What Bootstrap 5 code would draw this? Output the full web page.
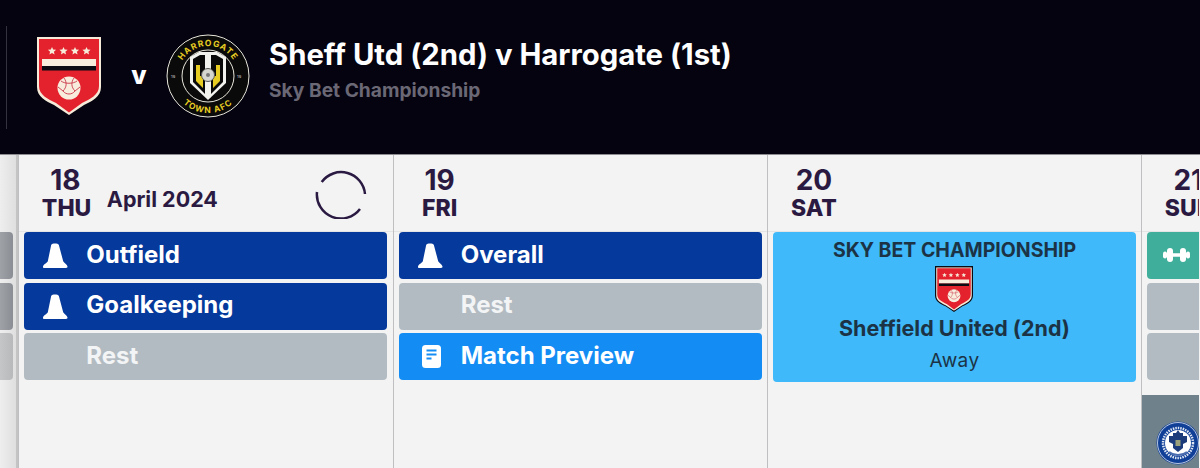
<!DOCTYPE html>
<html lang="en"><head><meta charset="utf-8"><title>Schedule</title>
<link href="https://cdn.jsdelivr.net/npm/bootstrap@5.3.0/dist/css/bootstrap.min.css" rel="stylesheet">
<style>
html,body{width:1200px;height:468px;overflow:hidden;background:#f3f3f4;}
body{font-family:Inter,"Liberation Sans",sans-serif;color:#2a1a42;}
.topbar{height:155px;background:#05030f;border-bottom:1px solid #8d8c91;padding-left:6px;}
.topdiv{width:1px;height:103px;background:#34323e;}
.crest-a{margin-left:30px;margin-top:-3px;}
.vs{width:65px;padding-left:11px;text-align:center;color:#fff;font-size:25px;font-weight:800;line-height:1;margin-top:-3px;}
.crest-b{margin-right:19px;margin-top:-3px;}
.ttlwrap{margin-top:-16px;}
.ttl{font-size:29.300px;font-weight:700;color:#fff;line-height:34px;}
.subttl{font-size:19.200px;font-weight:700;color:#6b6876;line-height:22px;margin-top:7px;}
.daysrow{height:313px;}
.sliver{flex:0 0 18.33px;background:linear-gradient(90deg,#eeeeef,#dfdfe0);border-right:2px solid #c4c4c5;}
.sliver .evt{width:13px;border-radius:0 4px 4px 0;}
.daycol{flex:0 0 374.33px;border-left:1px solid #bfbfc1;}
.daylast{flex:0 0 58px;overflow:hidden;}
.dayhead{height:77px;border-bottom:1px solid #e4e4e5;padding:11px 0 0 22.5px;}
.datebox{width:47px;text-align:center;}
.datenum{font-size:28px;font-weight:700;line-height:29px;}
.datewk{font-size:23px;font-weight:800;line-height:27px;}
.monthname{font-size:21.500px;font-weight:700;margin:20px 0 0 18px;line-height:26px;}
.spinner-ring{margin:1px 26px 0 auto;}
.evts{padding:0 5.33px 0 5px;}
.evt{height:47px;border-radius:4px;color:#fff;font-size:24px;font-weight:700;margin-bottom:3.5px;padding-bottom:2px;}
.evt-ic{width:62px;flex:0 0 62px;padding-left:19px;padding-top:2px;}
.bg-train{background:#05399b;}
.bg-rest{background:#b2bbc1;color:#f3f4f5;}
.bg-preview{background:#138df4;}
.bg-gym{background:#3fae9a;}
.bg-match{background:#3fb9f9;color:#1c3346;height:150px;border-radius:4px;}
.m-comp{font-size:19.500px;font-weight:700;line-height:24px;padding-top:6px;}
.m-team{font-size:21.500px;font-weight:700;line-height:26px;margin-top:3px;}
.m-away{font-size:19px;font-weight:400;line-height:24px;margin-top:8px;letter-spacing:.4px;}
.sl1{background:linear-gradient(90deg,#9fa3a8,#8a8e94);}
.sl2{background:linear-gradient(90deg,#c5c6c7,#b8b9ba);}
.lasttile{height:73px;background:#6f828c;margin-top:15px;}
.rochsvg{margin:26px 0 0 14px;}
</style></head><body>
<svg width="0" height="0" class="d-block position-absolute"><defs>
<symbol id="crest" viewBox="0 0 64 78">
<path d="M0 0H64V50C64 60 55 64 47 68L32 78L17 68C9 64 0 60 0 50Z" fill="#f6ead8"/>
<path d="M2 2H62V49C62 58 53 62 45 66L32 75.500L19 66C11 62 2 58 2 49Z" fill="#e4222d"/>
<path d="M5 22H59V29H5Z" fill="#f8ecdc"/><path d="M5 29H59V33.500H5Z" fill="#0c0a12"/>
<g fill="#f6ead8"><path d="M15 10l1.200 2.600 2.900.2-2.200 1.900.7 2.800-2.600-1.500-2.600 1.500.7-2.800-2.200-1.900 2.900-.2z"/><path d="M26.500 10l1.200 2.600 2.900.2-2.200 1.900.7 2.800-2.600-1.500-2.600 1.500.7-2.800-2.200-1.900 2.900-.2z"/><path d="M38 10l1.200 2.600 2.900.2-2.200 1.900.7 2.800-2.600-1.500-2.600 1.500.7-2.800-2.200-1.900 2.900-.2z"/><path d="M49.500 10l1.200 2.600 2.900.2-2.200 1.900.7 2.800-2.600-1.500-2.600 1.500.7-2.800-2.200-1.900 2.900-.2z"/></g>
<circle cx="32" cy="51" r="11.500" fill="#f8ecdc"/>
<path d="M27 41C30 45 30 50 26 54M37 41C34 45 34 50 38 54M24 44C28 47 36 47 40 44M26 54C29 58 35 58 38 54M21 50L26 54M43 50L38 54" fill="none" stroke="#c9384a" stroke-width=".9"/>
</symbol>
<symbol id="cone" viewBox="0 0 26 26"><path d="M8.500 2C9.500 0 15.500 0 16.500 2L21 19C22 21 25 22 25.500 24.500 25.700 25.500 25 26 24 26H1.500C.5 26 -.2 25.500 0 24.500 .5 22 4 21 5 19Z" fill="#fff"/></symbol>
<symbol id="note" viewBox="0 0 19 23"><rect width="19" height="23" rx="3.500" fill="#fff"/><path d="M4.500 5.500h10M4.500 9.500h10M4.500 13.500h5" stroke="#138df4" stroke-width="1.800"/></symbol>
</defs></svg>

<header class="topbar d-flex align-items-center">
 <div class="topdiv"></div>
 <svg class="crest-a" width="64" height="78" aria-hidden="true"><use href="#crest"/></svg>
 <div class="vs">v</div>
 <svg class="crest-b" width="84" height="84" viewBox="0 0 84 84" aria-hidden="true">
  <circle cx="42" cy="42" r="41" fill="#0a0a0a" stroke="#e9e7dc" stroke-width="1"/>
  <circle cx="42" cy="42" r="26" fill="#0a0a0a" stroke="#e9e7dc" stroke-width="1"/>
  <path id="arct" d="M12 42A30 30 0 0 1 72 42" fill="none"/>
  <path id="arcb" d="M5 42A37 37 0 0 0 79 42" fill="none"/>
  <text font-family="Inter,sans-serif" font-size="8.500" font-weight="700" fill="#e7cc22" letter-spacing="1"><textPath href="#arct" startOffset="50%" text-anchor="middle">HARROGATE</textPath></text>
  <text font-family="Inter,sans-serif" font-size="8.500" font-weight="700" fill="#e7cc22" letter-spacing="1"><textPath href="#arcb" startOffset="50%" text-anchor="middle">TOWN AFC</textPath></text>
  <text x="5" y="44" font-family="Inter,sans-serif" font-size="4" fill="#ddd">19</text>
  <text x="71" y="44" font-family="Inter,sans-serif" font-size="4" fill="#ddd">19</text>
  <path d="M24 23L33 18H51L60 23V49L42 66L24 49Z" fill="#f2f2ee"/>
  <path d="M27 25L34 21H39V60L27 48Z" fill="#0a0a0a"/><path d="M57 25L50 21H45V60L57 48Z" fill="#0a0a0a"/>
  <path d="M30 31V47L37 54V42H34V31ZM54 31V47L47 54V42H50V31Z" fill="#e7cc22"/>
  <path d="M40 21h1.200v43H40zM43 21h1.200v43H43z" fill="#f2f2ee"/>
  <circle cx="42" cy="41" r="6.500" fill="#d6d6d0" stroke="#555"/><circle cx="42" cy="41" r="2" fill="#777"/>
 </svg>
 <div class="ttlwrap">
  <div class="ttl">Sheff Utd (2nd) v Harrogate (1st)</div>
  <div class="subttl">Sky Bet Championship</div>
 </div>
</header>

<main class="daysrow d-flex overflow-hidden">
 <div class="sliver">
  <div style="height:77px"></div>
  <div class="evt sl1"></div><div class="evt sl1"></div><div class="evt sl2"></div>
 </div>
 <section class="daycol">
  <div class="dayhead d-flex">
   <div class="datebox"><div class="datenum">18</div><div class="datewk">THU</div></div>
   <div class="monthname">April 2024</div>
   <svg class="spinner-ring" width="52" height="52" viewBox="0 0 52 52" aria-hidden="true"><path d="M2 25A24 24 0 0 0 45 42M6.700 15A24 24 0 0 1 50 27" fill="none" stroke="#2a1a42" stroke-width="2.500"/></svg>
  </div>
  <div class="evts">
   <div class="evt bg-train d-flex align-items-center"><div class="evt-ic"><svg class="d-block" width="25" height="25"><use href="#cone"/></svg></div>Outfield</div>
   <div class="evt bg-train d-flex align-items-center"><div class="evt-ic"><svg class="d-block" width="25" height="25"><use href="#cone"/></svg></div>Goalkeeping</div>
   <div class="evt bg-rest d-flex align-items-center"><div class="evt-ic"></div>Rest</div>
  </div>
 </section>
 <section class="daycol">
  <div class="dayhead d-flex"><div class="datebox"><div class="datenum">19</div><div class="datewk">FRI</div></div></div>
  <div class="evts">
   <div class="evt bg-train d-flex align-items-center"><div class="evt-ic"><svg class="d-block" width="25" height="25"><use href="#cone"/></svg></div>Overall</div>
   <div class="evt bg-rest d-flex align-items-center"><div class="evt-ic"></div>Rest</div>
   <div class="evt bg-preview d-flex align-items-center"><div class="evt-ic"><svg class="d-block ms-1" width="19" height="23"><use href="#note"/></svg></div>Match Preview</div>
  </div>
 </section>
 <section class="daycol">
  <div class="dayhead d-flex"><div class="datebox"><div class="datenum">20</div><div class="datewk">SAT</div></div></div>
  <div class="evts">
   <div class="bg-match text-center">
    <div class="m-comp">SKY BET CHAMPIONSHIP</div>
    <svg class="d-block mx-auto mt-1" width="38" height="46" viewBox="-2 -2 68 82" aria-hidden="true"><path d="M-2-2H66V50C66 61 56 66 47 70L32 80L17 70C8 66-2 61-2 50Z" fill="#0c0a12"/><use href="#crest" width="64" height="78"/></svg>
    <div class="m-team">Sheffield United (2nd)</div>
    <div class="m-away">Away</div>
   </div>
  </div>
 </section>
 <section class="daycol daylast">
  <div class="dayhead d-flex"><div class="datebox"><div class="datenum">21</div><div class="datewk">SUN</div></div></div>
  <div class="evts pe-0">
   <div class="evt bg-gym d-flex align-items-center rounded-end-0 ps-3"><svg width="27" height="16" viewBox="0 0 27 16" aria-hidden="true"><path d="M2 8H25" stroke="#fff" stroke-width="3.500"/><rect x="4" y="1" width="6" height="14" rx="3" fill="#fff"/><rect x="17" y="1" width="6" height="14" rx="3" fill="#fff"/><rect x="0" y="4.500" width="4" height="7" rx="2" fill="#fff"/><rect x="23" y="4.500" width="4" height="7" rx="2" fill="#fff"/></svg></div>
   <div class="evt bg-rest rounded-end-0"></div>
   <div class="evt bg-rest rounded-end-0"></div>
  </div>
  <div class="lasttile d-flex">
   <svg class="rochsvg flex-shrink-0" width="44" height="44" viewBox="0 0 44 44" aria-hidden="true"><circle cx="22" cy="22" r="21.500" fill="#0f3f97"/><circle cx="22" cy="22" r="20.500" fill="none" stroke="#fff" stroke-width=".7"/><circle cx="22" cy="22" r="15" fill="none" stroke="#dfe6f3" stroke-width="2.500" stroke-dasharray="1.500 1"/><circle cx="22" cy="22" r="13" fill="#fff"/><path d="M17 12h3l2-3 2 3h3v3h4v6l-4 2v4l-5 4-5-4v-4l-4-2v-6h4z" fill="#1b3b7a"/><rect x="19.500" y="19" width="5" height="6" fill="#9aa07a"/><path d="M13 31C18 35 26 35 31 31" stroke="#4a6db0" stroke-width="2" fill="none"/></svg>
  </div>
 </section>
</main>
</body></html>
